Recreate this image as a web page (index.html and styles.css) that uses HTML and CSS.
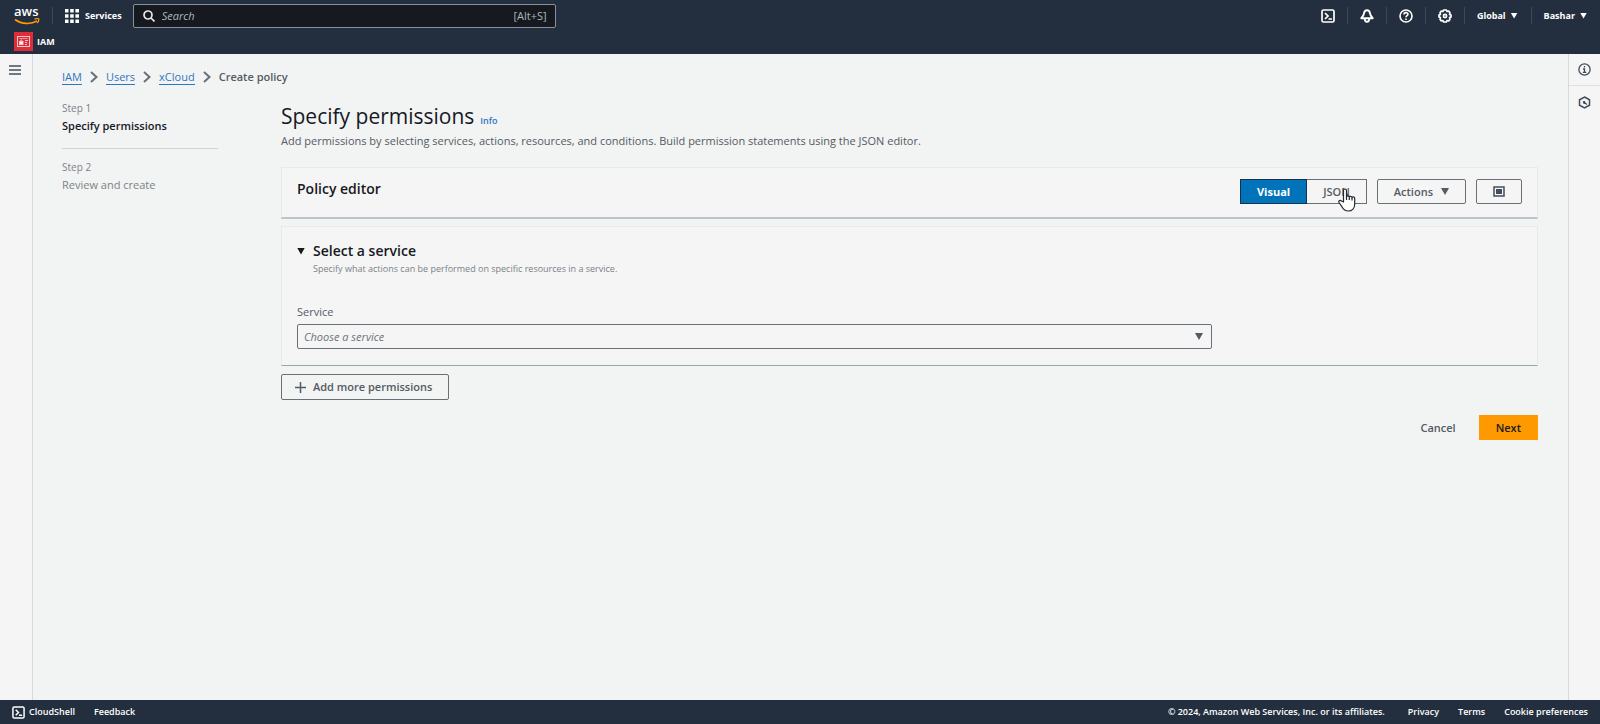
FILE: index.html
```html
<!DOCTYPE html>
<html lang="en">
<head>
    <meta charset="UTF-8">
    <meta name="viewport" content="width=device-width, initial-scale=1.0">
    <title>Create policy | IAM | Global</title>
    <link rel="stylesheet" href="styles.css">
</head>
<body>
    <header class="header">
        <nav class="topnav">
            <a class="logo" href="#">
                <span class="logo-text">aws</span>
                <svg class="logo-smile" width="26" height="7" viewBox="0 0 26 7" fill="none" stroke="#ff9900">
                    <path d="M1 1.5c7 5 16 5 22 1.6" stroke-width="1.7"/>
                    <path d="M20.5 1.2c2-.7 4-.6 4.2-.2.3.7-.4 2.8-1.5 4" stroke-width="1.3"/>
                </svg>
            </a>
            <button class="services" type="button">
                <svg width="14" height="14" viewBox="0 0 14 14" fill="#fff">
                    <path d="M0 0h3.500v3.500H0zM5.200 0h3.500v3.500H5.200zM10.400 0H14v3.500h-3.600zM0 5.200h3.500v3.500H0zM5.200 5.200h3.500v3.500H5.200zM10.400 5.200H14v3.500h-3.600zM0 10.400h3.500V14H0zM5.200 10.400h3.500V14H5.200zM10.400 10.400H14V14h-3.600z"/>
                </svg>
                Services
            </button>
            <div class="search">
                <svg width="12" height="12" viewBox="0 0 12 12" fill="none" stroke="#e8e8e8" stroke-width="1.7">
                    <circle cx="5" cy="5" r="4"/>
                    <path d="M8 8l3.500 3.500"/>
                </svg>
                <input class="search-input" type="text" placeholder="Search" aria-label="Search">
                <span class="shortcut">[Alt+S]</span>
            </div>
            <div class="tools">
                <button class="tool" type="button" aria-label="CloudShell">
                    <svg width="14" height="14" viewBox="0 0 14 14" fill="none" stroke="#fff" stroke-width="1.7">
                        <rect x="1" y="1" width="12" height="12" rx="1.5"/>
                        <path d="M4 4l3 3-3 3M7.500 10H11"/>
                    </svg>
                </button>
                <button class="tool" type="button" aria-label="Notifications">
                    <svg width="14" height="14" viewBox="0 0 14 14" fill="none" stroke="#fff" stroke-width="1.9" stroke-linejoin="round">
                        <path d="M7 1.200C4.800 1.200 4.200 2.800 4 4.300 3.800 6 3 7.400 1.300 9.200h11.400C11 7.400 10.200 6 10 4.300 9.800 2.800 9.200 1.200 7 1.200z"/>
                        <path d="M4.700 9.500c.2 4.500 4.400 4.500 4.600 0"/>
                    </svg>
                </button>
                <button class="tool" type="button" aria-label="Help">
                    <svg width="14" height="14" viewBox="0 0 14 14" fill="none" stroke="#fff" stroke-width="1.6">
                        <circle cx="7" cy="7" r="6"/>
                        <path d="M5 5.600c0-2.600 4-2.500 4-.3C9 6.800 7 6.600 7 8.300M7 9.500v1.500"/>
                    </svg>
                </button>
                <button class="tool" type="button" aria-label="Settings">
                    <svg width="14" height="14" viewBox="0 0 14 14" fill="none" stroke="#fff" stroke-width="1.7" stroke-linejoin="round">
                        <path d="M5.600 1h2.800l.6 1.500 1.700-.4 1.300 1.700-.5 1.600 1.500.7v1.800l-1.500.7.5 1.600-1.300 1.700-1.700-.4-.6 1.500H5.600L5 11.500l-1.700.4L2 10.200l.5-1.600L1 7.900V6.100l1.500-.7L2 3.800l1.300-1.700 1.700.4z"/>
                        <circle cx="7" cy="7" r="1.600"/>
                    </svg>
                </button>
                <button class="menu" type="button">Global <span class="caret"></span></button>
                <button class="menu" type="button">Bashar <span class="caret"></span></button>
            </div>
        </nav>
        <div class="favorites">
            <a class="favorite" href="#">
                <svg width="19" height="19" viewBox="0 0 19 19" fill="none" stroke="#f7c4c8">
                    <rect width="19" height="19" fill="#dd2c3a" stroke="none"/>
                    <rect x="3.500" y="4.500" width="12" height="10"/>
                    <path d="M5.500 6.500h8" stroke-width=".7"/>
                    <rect x="5.500" y="9.500" width="3.500" height="3" fill="#fff"/>
                    <path d="M6.200 9.500c0-2 2.100-2 2.100 0M11 8.500h3M11 10.500h2M11 12.500h2"/>
                </svg>
                IAM
            </a>
        </div>
    </header>

    <div class="layout">
        <aside class="rail">
            <button class="rail-btn" type="button" aria-label="Open navigation">
                <svg width="12" height="10" viewBox="0 0 12 10" stroke="#414d5c" stroke-width="1.5">
                    <path d="M0 1h12M0 5h12M0 9h12"/>
                </svg>
            </button>
        </aside>

        <main class="content">
            <nav class="breadcrumbs" aria-label="Breadcrumbs">
                <a href="#">IAM</a>
                <svg class="chevron" width="8" height="12" viewBox="0 0 8 12"><path d="M1 1l5.500 5L1 11"/></svg>
                <a href="#">Users</a>
                <svg class="chevron" width="8" height="12" viewBox="0 0 8 12"><path d="M1 1l5.500 5L1 11"/></svg>
                <a href="#">xCloud</a>
                <svg class="chevron" width="8" height="12" viewBox="0 0 8 12"><path d="M1 1l5.500 5L1 11"/></svg>
                <span class="current">Create policy</span>
            </nav>

            <div class="wizard">
                <ol class="steps">
                    <li class="step active">
                        <span class="step-number">Step 1</span>
                        <span class="step-name">Specify permissions</span>
                    </li>
                    <li class="step">
                        <span class="step-number">Step 2</span>
                        <span class="step-name">Review and create</span>
                    </li>
                </ol>

                <section class="form">
                    <div class="heading">
                        <h1>Specify permissions</h1>
                        <a class="info" href="#">Info</a>
                    </div>
                    <p class="description">Add permissions by selecting services, actions, resources, and conditions. Build permission statements using the JSON editor.</p>

                    <div class="card editor">
                        <h2>Policy editor</h2>
                        <div class="editor-actions">
                            <div class="segmented">
                                <button class="segment selected" type="button">Visual</button>
                                <button class="segment" type="button">JSON
                                    <svg class="pointer" width="18" height="24" viewBox="0 0 18 24" fill="#fff" stroke="#23272c" stroke-width="1.2" stroke-linejoin="round">
                                        <path d="M5.500 14V2.500c0-2 3-2 3 0V9c0-1.500 2.800-1.500 2.800.3 0-1.500 2.700-1.300 2.700.5 0-1.300 2.700-1.200 2.700.7V16c0 4-2.500 7-6.500 7-3 0-4.700-1.400-6-3.800L1 14.500c-.8-1.700 1.200-2.800 2.500-1.500z"/>
                                        <path d="M8.500 9v3M11.300 9.500V12M14 10v2.500" fill="none"/>
                                    </svg>
                                </button>
                            </div>
                            <button class="btn" type="button">Actions <span class="caret"></span></button>
                            <button class="btn toggle" type="button" aria-label="Toggle panel">
                                <svg width="12" height="11" viewBox="0 0 12 11">
                                    <rect x="1" y="1" width="10" height="9" fill="none" stroke="#414d5c" stroke-width="1.5"/>
                                    <rect x="3" y="3" width="6" height="5" fill="#414d5c"/>
                                </svg>
                            </button>
                        </div>
                    </div>

                    <div class="card service">
                        <button class="expander" type="button" aria-expanded="true">
                            <span class="caret"></span>
                            Select a service
                        </button>
                        <p class="hint">Specify what actions can be performed on specific resources in a service.</p>
                        <label for="service">Service</label>
                        <div class="field">
                            <div class="select">
                                <select id="service">
                                    <option>Choose a service</option>
                                </select>
                                <span class="caret"></span>
                            </div>
                        </div>
                    </div>

                    <button class="btn add" type="button">
                        <svg width="11" height="11" viewBox="0 0 11 11" stroke="#545b64" stroke-width="1.5">
                            <path d="M5.500 0v11M0 5.500h11"/>
                        </svg>
                        Add more permissions
                    </button>

                    <div class="footer-actions">
                        <button class="btn link" type="button">Cancel</button>
                        <button class="btn primary" type="button">Next</button>
                    </div>
                </section>
            </div>
        </main>

        <aside class="rail right">
            <button class="rail-btn" type="button" aria-label="Info">
                <svg width="13" height="13" viewBox="0 0 13 13" fill="none" stroke="#414d5c" stroke-width="1.3">
                    <circle cx="6.500" cy="6.500" r="5.600"/>
                    <path d="M6.500 3v1.500M5 6h1.500v3.300M4.800 9.300h3.500"/>
                </svg>
            </button>
            <button class="rail-btn" type="button" aria-label="Diagnostics">
                <svg width="13" height="13" viewBox="0 0 13 13" fill="none" stroke="#414d5c" stroke-width="1.5">
                    <path d="M6.500 1l5 2.800v5.400l-5 2.800-5-2.800V3.800z"/>
                    <path d="M5 5.500l4 3M6.500 5v3M5 7h3" stroke-width="1.2"/>
                </svg>
            </button>
        </aside>
    </div>

    <footer class="footer">
        <a class="cloudshell" href="#">
            <svg width="13" height="13" viewBox="0 0 14 14" fill="none" stroke="#fff" stroke-width="1.6">
                <rect x="1" y="1" width="12" height="12" rx="1.5"/>
                <path d="M4 4l3 3-3 3M7.500 10H11"/>
            </svg>
            CloudShell
        </a>
        <a href="#">Feedback</a>
        <span class="copyright">© 2024, Amazon Web Services, Inc. or its affiliates.</span>
        <a href="#">Privacy</a>
        <a href="#">Terms</a>
        <a href="#">Cookie preferences</a>
    </footer>
</body>
</html>
```
FILE: styles.css
```css
* {
    box-sizing: border-box;
}

body {
    margin: 0;
    min-height: 100vh;
    display: flex;
    flex-direction: column;
    background: #f2f3f3;
    color: #545b64;
    font-family: "Open Sans", "Noto Sans", sans-serif;
    font-size: 11px;
    line-height: 16px;
}

button, input, select {
    font: inherit;
    color: inherit;
    border: 0;
    background: none;
    margin: 0;
    padding: 0;
}

button {
    display: flex;
    align-items: center;
    justify-content: center;
}

svg {
    display: block;
    flex: none;
}

a {
    color: inherit;
    text-decoration: none;
}

h1, h2, p, ol {
    margin: 0;
    padding: 0;
}

.caret {
    flex: none;
    width: 8px;
    height: 7px;
    background: currentColor;
    clip-path: polygon(0 0, 100% 0, 50% 100%);
}

/* header */
.header {
    background: #232f3e;
    color: #fff;
    font-size: 9px;
    font-weight: 700;
}

.topnav {
    height: 31px;
    display: flex;
    align-items: center;
}

.logo {
    width: 53px;
    height: 17px;
    padding-left: 14px;
    border-right: 1px solid #3d4856;
}

.logo-text {
    display: block;
    font-size: 13px;
    font-weight: 600;
    line-height: 9px;
}

.logo-smile {
    margin-top: 2px;
}

.services {
    gap: 6px;
    padding: 0 11px 0 12px;
}

.search {
    width: 423px;
    height: 24px;
    display: flex;
    align-items: center;
    gap: 7px;
    padding: 0 8px 0 9px;
    background: #16191f;
    border: 1px solid #87919b;
    border-radius: 2px;
    color: #aab7b8;
    font-size: 11px;
    font-weight: 400;
}

.search-input {
    flex: 1;
    min-width: 0;
}

.search-input::placeholder {
    color: #aab7b8;
    font-style: italic;
}

.tools {
    display: flex;
    margin-left: auto;
}

.tool {
    width: 39px;
    height: 17px;
    border-right: 1px solid #3d4856;
}

.menu {
    height: 17px;
    gap: 5px;
    padding: 0 13px 0 12px;
}

.menu .caret {
    width: 7px;
    height: 6px;
}

.menu + .menu {
    border-left: 1px solid #3d4856;
}

.favorites {
    display: flex;
    height: 23px;
    padding-left: 14px;
}

.favorite {
    display: flex;
    align-items: center;
    gap: 4px;
    height: 21px;
}

/* page layout */
.layout {
    flex: 1;
    display: flex;
}

.rail {
    width: 33px;
    background: #f5f5f5;
    border-right: 1px solid #d2dce0;
}

.rail.right {
    width: 32px;
    border-right: 0;
    border-left: 1px solid #d2dce0;
}

.rail-btn {
    width: 100%;
    height: 31px;
}

.rail:not(.right) .rail-btn {
    padding-right: 2px;
}

.rail-btn + .rail-btn {
    height: 34px;
    border-top: 1px solid #dde1e3;
}

.content {
    flex: 1;
    min-width: 0;
    padding: 15px 30px 15px 29px;
}

.breadcrumbs {
    display: flex;
    align-items: center;
    gap: 8px;
}

.breadcrumbs a {
    color: #2f77bd;
    line-height: 14px;
    border-bottom: 1px solid #2f77bd;
}

.chevron {
    fill: none;
    stroke: #687078;
    stroke-width: 2;
}

.current {
    font-weight: 600;
}

.wizard {
    display: grid;
    grid-template-columns: 156px minmax(0, 1fr);
    column-gap: 63px;
    padding-top: 15px;
}

.steps {
    list-style: none;
}

.step {
    display: flex;
    flex-direction: column;
    gap: 2px;
    color: #7b8288;
}

.step + .step {
    margin-top: 14px;
    padding-top: 10px;
    border-top: 1px solid #c6d4dc;
}

.step-number {
    font-size: 10px;
}

.active .step-name {
    color: #16191f;
    font-weight: 600;
}

/* form */
.form {
    display: flex;
    flex-direction: column;
}

.heading {
    display: flex;
    align-items: baseline;
    gap: 6px;
    height: 33px;
}

h1 {
    color: #16191f;
    font-size: 21px;
    font-weight: 400;
    line-height: 32px;
}

.info {
    color: #2f77bd;
    font-size: 9px;
    font-weight: 600;
}

.description {
    margin-bottom: 18px;
}

.card {
    background: #f5f5f5;
    border: 1px solid #e6eaeb;
    border-bottom-color: #9ba7af;
    padding: 0 15px;
}

.editor {
    display: flex;
    align-items: flex-start;
    justify-content: space-between;
    height: 52px;
    padding-top: 11px;
    border-bottom: 2px solid #bcc5c9;
    margin-bottom: 7px;
}

h2 {
    color: #16191f;
    font-size: 14px;
    font-weight: 600;
    line-height: 20px;
}

.editor-actions, .segmented {
    display: flex;
}

.editor-actions {
    gap: 10px;
}

.btn, .segment {
    height: 25px;
    padding: 0 16px;
    border: 1px solid #687078;
    border-radius: 2px;
    font-weight: 600;
}

.btn {
    gap: 8px;
}

.segment {
    position: relative;
    border-radius: 0;
    border-left: 0;
}

.segment.selected {
    background: #0073bb;
    border: 1px solid #16334b;
    color: #fff;
    font-weight: 700;
}

/* hand cursor hovering over the JSON tab */
.pointer {
    position: absolute;
    left: 31px;
    top: 8px;
}

.service {
    padding: 14px 15px 16px;
    margin-bottom: 8px;
}

.expander {
    gap: 8px;
    color: #16191f;
    font-size: 14px;
    font-weight: 600;
    line-height: 20px;
}

.hint {
    padding-left: 16px;
    margin-bottom: 27px;
    color: #7b8288;
    font-size: 9px;
}

label {
    display: block;
    margin-bottom: 4px;
}

.field {
    display: grid;
    grid-template-columns: 3fr 1fr;
    gap: 5px;
}

.select {
    display: grid;
    align-items: center;
}

.select select, .select .caret {
    grid-area: 1 / 1;
}

.select .caret {
    justify-self: end;
    margin-right: 9px;
    pointer-events: none;
}

select {
    appearance: none;
    height: 25px;
    padding: 0 6px;
    border: 1px solid #687078;
    border-radius: 2px;
    color: #6c747b;
    font-style: italic;
}

.add {
    align-self: flex-start;
    height: 26px;
    padding: 0 16px 0 13px;
    gap: 7px;
}

.footer-actions {
    display: flex;
    justify-content: flex-end;
    gap: 6px;
    margin-top: 15px;
}

.link {
    border-color: transparent;
}

.primary {
    background: #ff9900;
    border-color: #ff9900;
    border-radius: 0;
    color: #16191f;
}

/* footer */
.footer {
    height: 24px;
    display: flex;
    align-items: center;
    padding: 0 12px;
    gap: 19px;
    background: #232f3e;
    color: #fff;
    font-size: 9px;
    font-weight: 600;
}

.cloudshell {
    display: flex;
    align-items: center;
    gap: 4px;
}

.copyright {
    margin-left: auto;
    margin-right: 4px;
}
```
